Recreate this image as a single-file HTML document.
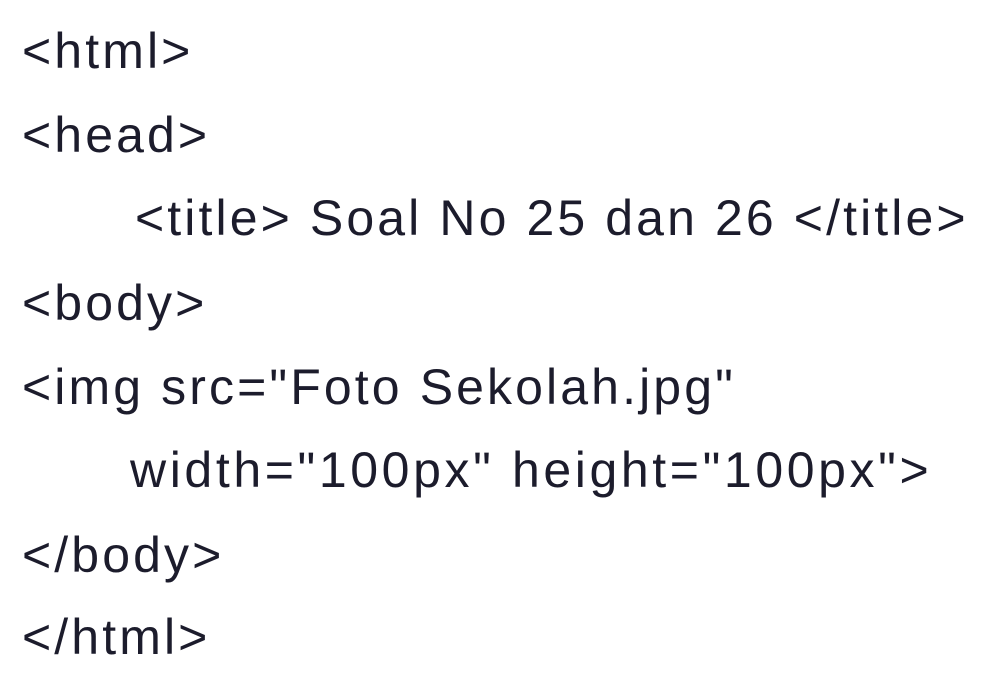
<!DOCTYPE html>
<html><head><meta charset="utf-8"><style>
html,body{margin:0;padding:0;background:#fff;width:1000px;height:673px;overflow:hidden}
.l{position:absolute;font-family:"Liberation Sans","DejaVu Sans",sans-serif;font-size:50px;color:#1c1c2c;white-space:pre;line-height:1;letter-spacing:3.1px}
</style></head><body>
<div class="l" style="left:22px;top:26px">&lt;html&gt;</div>
<div class="l" style="left:22px;top:110px">&lt;head&gt;</div>
<div class="l" style="left:135px;top:193px">&lt;title&gt; Soal No 25 dan 26 &lt;/title&gt;</div>
<div class="l" style="left:22px;top:278px">&lt;body&gt;</div>
<div class="l" style="left:22px;top:362px">&lt;img src="Foto Sekolah.jpg"</div>
<div class="l" style="left:130px;top:445px;letter-spacing:3.6px">width="100px" height="100px"&gt;</div>
<div class="l" style="left:22px;top:530px">&lt;/body&gt;</div>
<div class="l" style="left:22px;top:612px">&lt;/html&gt;</div>
</body></html>
